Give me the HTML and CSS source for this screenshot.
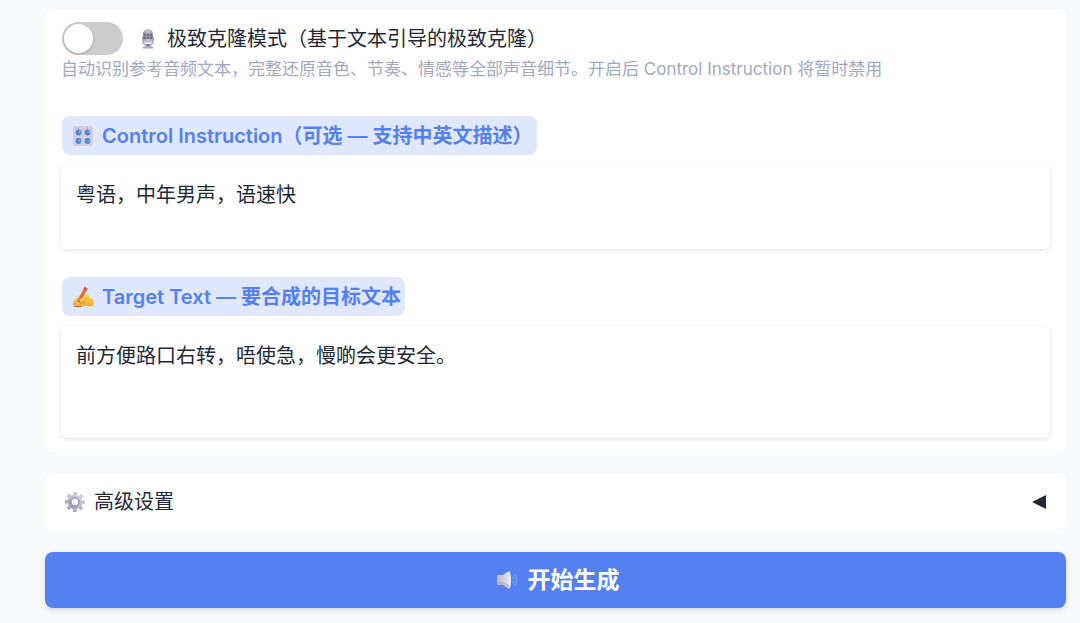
FILE: index.html
```html
<!DOCTYPE html>
<html lang="zh-CN">
<head>
<meta charset="utf-8">
<meta name="viewport" content="width=device-width, initial-scale=1">
<title>语音合成</title>
<link rel="stylesheet" href="styles.css">
</head>
<body>
<main class="page">
  <section class="card">
    <label class="toggle">
      <input class="switch" type="checkbox" role="switch" aria-describedby="clone-hint">
      <svg class="icon icon-mic" viewBox="0 0 22 22" aria-hidden="true">
        <defs><linearGradient id="mic" x1="0" x2="1" y1="0" y2="0"><stop offset="0" stop-color="#9a8fa5"/><stop offset=".5" stop-color="#d0c9d8"/><stop offset="1" stop-color="#a79cb2"/></linearGradient></defs>
        <path d="M6 9v3.500a5 5 0 0 0 10 0V9" fill="none" stroke="#b5abc0" stroke-width="2"/>
        <rect x="6" y="1" width="10" height="14" rx="5" fill="url(#mic)"/>
        <path d="M6.500 5.500h9v5.500h-9z" fill="#75697f"/>
        <path d="M9.500 4v8M12.500 4v8M6.500 8.200h9" stroke="#b0a6bb" stroke-width=".7"/>
        <path d="M9.500 16h3v2.500h-3z" fill="#81758c"/>
        <path d="M5.500 20.500c0-2 2-2.500 5.500-2.500s5.500.5 5.500 2.500z" fill="#b0a6bb"/>
      </svg>
      <span>极致克隆模式（基于文本引导的极致克隆）</span>
    </label>
    <p class="hint" id="clone-hint">自动识别参考音频文本，完整还原音色、节奏、情感等全部声音细节。开启后 Control Instruction 将暂时禁用</p>

    <div class="field">
      <label class="tag" for="control">
        <svg class="icon" viewBox="0 0 22 22" aria-hidden="true">
          <rect x="1" y="1" width="20" height="20" rx="2" fill="#d5cde5"/>
          <path d="M3.500 4.500l1 1M6.500 2.500v2M9.500 4.500l-1 1M12.500 4.500l1 1M15.500 2.500v2M18.500 4.500l-1 1M3.500 13l1 1M9.500 13l-1 1M12.500 13l1 1M18.500 13l-1 1" stroke="#a79db3" stroke-width="1"/>
          <g fill="#4a8bd0"><circle cx="6.500" cy="7.500" r="2.900"/><circle cx="15.500" cy="7.500" r="2.900"/><circle cx="6.500" cy="16" r="2.900"/><circle cx="15.500" cy="16" r="2.900"/></g>
          <path d="M6.500 7.500l2-1M15.500 7.500l2-1M6.500 16l2-.5M15.500 16l2 .5" stroke="#8fc2f0" stroke-width="1.200"/>
        </svg>
        <span>Control Instruction（可选 — 支持中英文描述）</span>
      </label>
      <textarea class="input" id="control" rows="2">粤语，中年男声，语速快</textarea>
    </div>

    <div class="field">
      <label class="tag" for="target">
        <svg class="icon" viewBox="0 0 22 22" aria-hidden="true">
          <defs><linearGradient id="hand" x1="0" x2="0" y1="0" y2="1"><stop offset="0" stop-color="#fbd64b"/><stop offset="1" stop-color="#e9a83d"/></linearGradient></defs>
          <path d="M1 18.500c0-3 1-4.500 3-6l4-4c1-.8 2.500-.7 3 .2l3-.7c2 0 3 1.500 4 3.500l3.500 2v6.500l-4 .5-3-1-5.500 1.500c-3 .8-5 .8-6-.2z" fill="url(#hand)"/>
          <path d="M5.500 14l4-2M11 13.500l3-1M8 18l5-2" fill="none" stroke="#d98c32" stroke-width="1"/>
          <path d="M4 20l1.200-4.500L12.500 1l3 1.500L8 16.500z" fill="#e96442"/>
          <path d="M12.500 1l3 1.500-1 2-3-1.500z" fill="#e44f5b"/>
          <path d="M4 20l1.200-4.500L8 16.500z" fill="#f0c5a2"/>
          <path d="M2 20.500h7" stroke="#c66770" stroke-width="1"/>
          <path d="M7.500 13l4.500-1.500c1 0 1.200 1.500.3 2L8 15.500z" fill="#fbcf48"/>
        </svg>
        <span>Target Text — 要合成的目标文本</span>
      </label>
      <textarea class="input" id="target" rows="3">前方便路口右转，唔使急，慢啲会更安全。</textarea>
    </div>
  </section>

  <button class="accordion" type="button" aria-expanded="false">
    <svg class="icon" viewBox="0 0 22 22" aria-hidden="true">
      <defs><linearGradient id="gear" x1="0" x2="1" y1="1" y2="0"><stop offset="0" stop-color="#a598b5"/><stop offset="1" stop-color="#d6cfe2"/></linearGradient></defs>
      <g stroke="url(#gear)" fill="none">
        <circle cx="11" cy="11" r="5.300" stroke-width="4"/>
        <circle cx="11" cy="11" r="8.500" stroke-width="3" stroke-dasharray="3.676 3" stroke-dashoffset="1.800"/>
      </g>
      <circle cx="11" cy="11" r="4.200" fill="none" stroke="#9a8fa8" stroke-width="1"/>
    </svg>
    <span class="accordion-title">高级设置</span>
    <svg class="arrow" viewBox="0 0 14 14" aria-hidden="true"><path d="M0 7L14 0v14z" fill="#1f2937"/></svg>
  </button>

  <button class="generate" type="button">
    <svg class="icon" viewBox="0 0 22 22" aria-hidden="true">
      <defs><linearGradient id="horn" x1="0" x2="1" y1="0" y2="0"><stop offset="0" stop-color="#beb7c6"/><stop offset="1" stop-color="#e7e2eb"/></linearGradient></defs>
      <path d="M1 6h6l6-4v18l-6-4H1z" fill="url(#horn)"/>
      <path d="M13 2c2.700 2 2.700 16 0 18z" fill="#f2edf4"/>
      <path d="M1 13h6l6 3v4l-6-4H1z" fill="#a79eb3" opacity=".5"/>
      <path d="M16.500 7.500c1.700 2 1.700 5 0 7M18.500 5c3 3.500 3 8.500 0 12" fill="none" stroke="#62a9f2" stroke-width="1.300"/>
    </svg>
    <span>开始生成</span>
  </button>
</main>
</body>
</html>
```
FILE: styles.css
```css
* {
  box-sizing: border-box;
}

body {
  margin: 0;
  background: #f9fafc;
  color: #1f2937;
  font-family: Inter, "Noto Sans CJK SC", sans-serif;
  font-size: 20px;
  line-height: 28px;
}

button,
textarea {
  font: inherit;
  color: inherit;
  border: 0;
}

.page {
  display: flex;
  flex-direction: column;
  gap: 22px;
  padding: 10px 14px 15px 45px;
}

.card {
  padding: 12px 16px 14px;
  border-radius: 8px;
  background: #fff;
}

.icon {
  flex: none;
  width: 22px;
  height: 22px;
}

.toggle {
  display: flex;
  align-items: center;
  width: fit-content;
  height: 33px;
  margin-left: 1px;
}

.switch {
  appearance: none;
  display: flex;
  align-items: center;
  width: 61px;
  height: 33px;
  margin: 0 14px 0 0;
  padding: 2px;
  border-radius: 17px;
  background: #ccc;
}

.switch::before {
  content: "";
  width: 29px;
  height: 29px;
  border-radius: 50%;
  background: #fff;
  box-shadow: 0 1px 3px rgb(0 0 0 / 20%);
}

.switch:checked {
  justify-content: flex-end;
  background: #5580f2;
}

.icon-mic {
  margin-right: 8px;
}

.hint {
  margin: 0;
  color: #a0aabf;
  font-size: 17px;
}

.field {
  display: flex;
  flex-direction: column;
  align-items: flex-start;
  gap: 11px;
  margin-top: 28px;
}

.hint + .field {
  margin-top: 33px;
}

.tag {
  display: flex;
  align-items: center;
  gap: 8px;
  height: 39px;
  margin-left: 1px;
  padding: 0 4px 0 10px;
  border-radius: 8px;
  background: #dfe8fe;
  color: #5580f3;
  font-weight: 600;
}

.input {
  display: block;
  width: 100%;
  padding: 15px 15px 12px;
  border-radius: 6px;
  background: #fff;
  box-shadow: 0 1px 4px rgb(0 0 0 / 12%);
  outline: 0;
  resize: none;
  overflow: hidden;
}

.accordion {
  display: flex;
  align-items: center;
  gap: 8px;
  padding: 14px 20px 14px 19px;
  border-radius: 8px;
  background: #fff;
  text-align: left;
}

.accordion-title {
  flex: 1;
}

.arrow {
  width: 14px;
  height: 14px;
}

.generate {
  display: flex;
  align-items: center;
  justify-content: center;
  gap: 10px;
  padding: 14px 14px 14px 18px;
  border-radius: 8px;
  background: #5580f2;
  box-shadow: 0 2px 6px rgb(0 0 0 / 14%);
  color: #fff;
  font-size: 23px;
  font-weight: 700;
}
```
